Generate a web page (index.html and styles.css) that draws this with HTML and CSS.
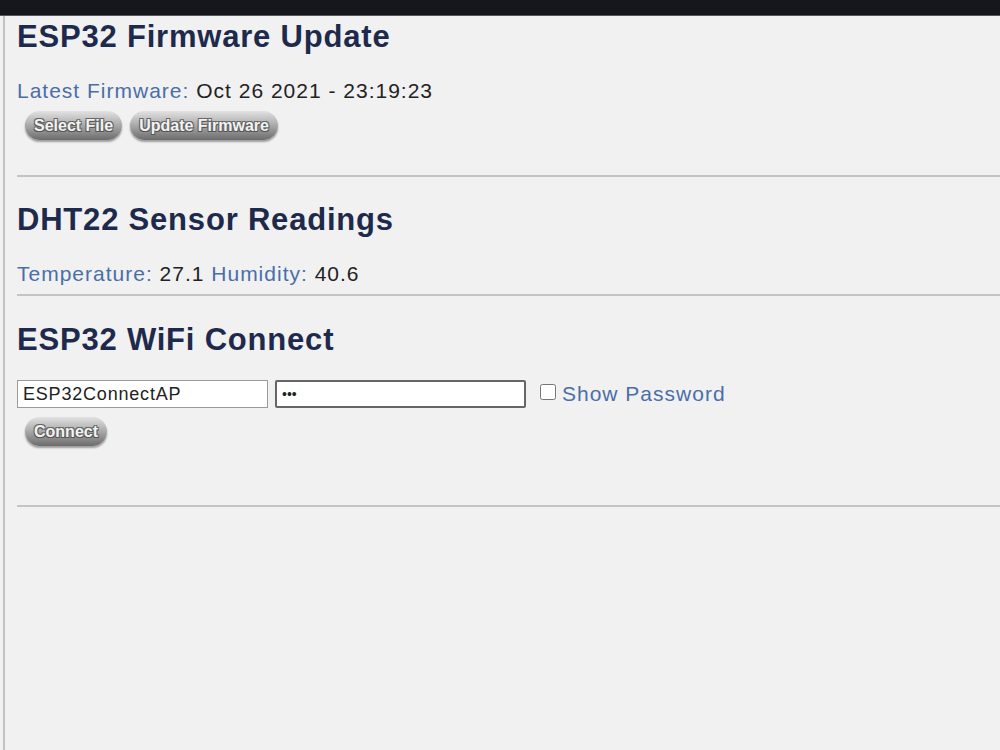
FILE: index.html
```html
<!DOCTYPE html>
<html lang="en">

<head>
    <meta charset="UTF-8">
    <meta name="viewport" content="width=device-width, initial-scale=1.0">
    <title>ESP32</title>
    <link rel="stylesheet" href="styles.css">
</head>

<body>
    <div id="topBar"></div>
    <div id="page">
        <!-- Firmware -->
        <div class="section">
            <h1 class="title firstTitle">ESP32 Firmware Update</h1>
            <p class="info"><span class="label">Latest Firmware:</span> Oct 26 2021 - 23:19:23</p>
            <div class="btnRow">
                <button type="button" class="pill">Select File</button>
                <button type="button" class="pill">Update Firmware</button>
            </div>
        </div>
        <hr class="sep sepFirst">

        <!-- Sensor -->
        <div class="section">
            <h1 class="title sensorTitle">DHT22 Sensor Readings</h1>
            <p class="info"><span class="label">Temperature:</span> 27.1 <span class="label">Humidity:</span> 40.6</p>
        </div>
        <hr class="sep sepSecond">

        <!-- WiFi -->
        <div class="section">
            <h1 class="title wifiTitle">ESP32 WiFi Connect</h1>
            <div id="wifiRow">
                <input type="text" class="field" value="ESP32ConnectAP">
                <input type="password" class="field active" value="123">
                <label class="showPass"><input type="checkbox" class="check"> Show Password</label>
            </div>
            <div class="btnRow connectRow">
                <button type="button" class="pill">Connect</button>
            </div>
        </div>
        <hr class="sep sepThird">
    </div>
</body>

</html>
```

FILE: styles.css
```css
body {
    margin: 0;
    background-color: #f1f1f1;
    font-family: "Liberation Sans", Arial, sans-serif;
    height: 100vh;
    display: flex;
    flex-direction: column;
}

#topBar {
    height: 15px;
    background-color: #16171c;
    border-bottom: 1px solid #55565a;
    flex-shrink: 0;
}

#page {
    flex: 1;
    margin-left: 3px;
    border-left: 2px solid #c2c2c2;
    padding-left: 12px;
}

.section {
    display: flex;
    flex-direction: column;
    align-items: flex-start;
}

.title {
    font-size: 31px;
    font-weight: bold;
    letter-spacing: 0.8px;
    color: #1e2a4b;
    margin: 24px 0 0 0;
}

.firstTitle {
    margin-top: 3px;
}

.sensorTitle {
    margin-top: 25px;
}

.wifiTitle {
    margin-top: 26px;
}

.info {
    font-size: 21px;
    letter-spacing: 1px;
    color: #222;
    margin: 24px 0 0 0;
}

.label {
    color: #4a6ea8;
}

.btnRow {
    display: flex;
    gap: 8px;
    margin-left: 8px;
    margin-top: 8px;
}

.connectRow {
    margin-top: 9px;
}

.pill {
    font-family: "Liberation Sans", Arial, sans-serif;
    font-size: 16px;
    font-weight: bold;
    color: #f2f2f2;
    height: 29px;
    padding: 0 9px;
    border: none;
    border-radius: 15px;
    background: linear-gradient(#e2e2e2, #b4b4b4 40%, #8a8a8a 75%, #6c6c6c);
    box-shadow: 0 2px 2px rgba(0, 0, 0, 0.35);
    text-shadow: -1px -1px 0 #666, 1px -1px 0 #666, -1px 1px 0 #555, 1px 1px 0 #555;
    cursor: pointer;
}

.sep {
    border: none;
    border-top: 2px solid #c4c4c4;
    margin: 0;
}

.sepFirst {
    margin-top: 35px;
}

.sepSecond {
    margin-top: 8px;
}

.sepThird {
    margin-top: 59px;
}

#wifiRow {
    display: flex;
    align-items: center;
    gap: 7px;
    margin-top: 22px;
}

.field {
    width: 251px;
    height: 28px;
    box-sizing: border-box;
    padding: 0 5px;
    border: 1px solid #9a9a9a;
    background-color: #fff;
    font-family: "Liberation Sans", Arial, sans-serif;
    font-size: 18px;
    letter-spacing: 0.8px;
    color: #222;
    outline: none;
}

.field.active {
    border: 2px solid #666;
    border-radius: 2px;
    letter-spacing: 0;
    font-size: 14px;
}

.showPass {
    display: flex;
    align-items: center;
    font-size: 21px;
    letter-spacing: 1px;
    color: #4a6ea8;
    margin-left: 7px;
}

.check {
    width: 16px;
    height: 16px;
    margin: 0 6px 4px 0;
}
```
